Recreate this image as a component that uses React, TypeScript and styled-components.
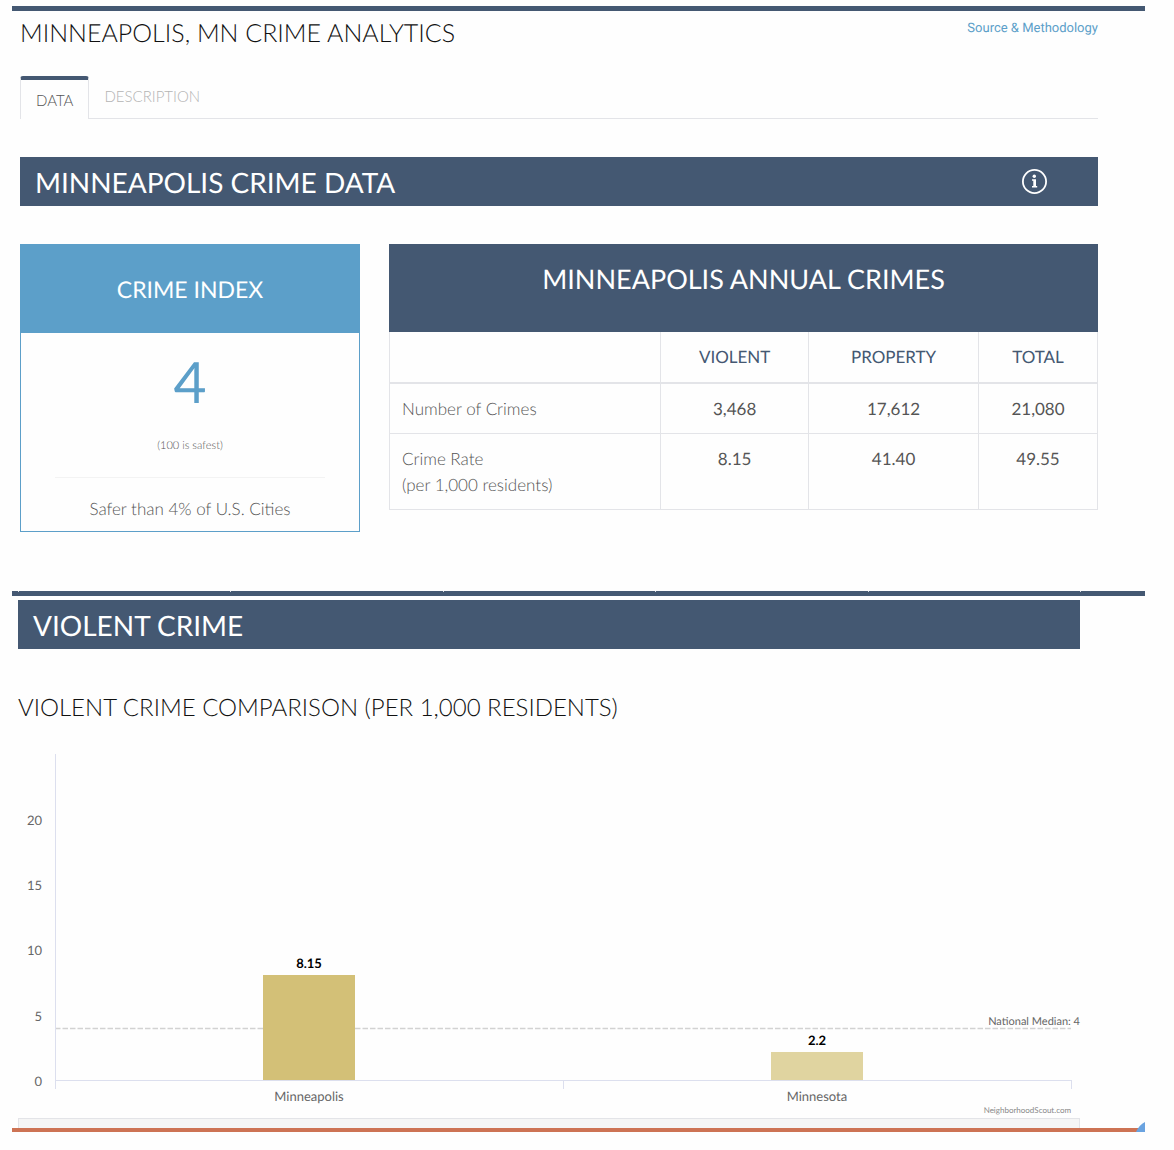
import styled, { createGlobalStyle } from 'styled-components'

const GlobalStyle = createGlobalStyle`
	* {
		box-sizing: border-box;
	}

	body {
		margin: 0;
		background: #fefefe;
		color: #222222;
		font-family: Lato, "Liberation Sans", sans-serif;
		text-rendering: geometricPrecision;
	}
`

const navy = '#445872'
const blue = '#5c9fc9'
const line = '#e3e4e8'

const Page = styled.main`
	padding: 6px 29px 18px 12px;
`

const Rule = styled.div`
	display: flex;
	justify-content: space-between;
	height: 5px;
	padding: 0 64px 0 6px;
	background: ${navy};
`

const RuleMark = styled.span`
	width: 1px;
	height: 1px;
	background: #d5dae1;
`

const Overview = styled.section`
	padding: 0 47px 59px 8px;
`

const Header = styled.header`
	display: flex;
	justify-content: space-between;
	align-items: flex-start;
	height: 65px;
	padding-top: 6px;
`

const Title = styled.h1`
	margin: 0;
	font-size: 25px;
	font-weight: 300;
	line-height: 33px;
	color: #111111;
`

const SourceLink = styled.a`
	font-family: Roboto, sans-serif;
	font-size: 13px;
	line-height: 24px;
	color: ${blue};
	text-decoration: none;
`

const Tabs = styled.nav`
	display: flex;
	height: 43px;
	margin-bottom: 38px;
	border-bottom: 1px solid ${line};
`

const Tab = styled.button<{ $selected?: boolean }>`
	height: ${props => props.$selected ? "43px" : "40px"};
	padding: 0 15px;
	border: ${props => props.$selected ? `1px solid ${line}` : "0"};
	border-top: ${props => props.$selected ? `4px solid ${navy}` : "0"};
	border-bottom: 0;
	border-radius: 3px 3px 0 0;
	background: #fefefe;
	font-family: inherit;
	font-size: 15px;
	font-weight: 300;
	color: ${props => props.$selected ? "#555555" : "#b4b4b4"};
	cursor: pointer;
`

const Banner = styled.div`
	display: flex;
	justify-content: space-between;
	align-items: center;
	height: 49px;
	padding: 0 50px 0 15px;
	background: ${navy};
	color: #ffffff;
`

const BannerTitle = styled.h2`
	margin: 0;
	font-size: 28px;
	font-weight: 400;
	line-height: 48px;
`

const InfoButton = styled.button`
	display: flex;
	padding: 0;
	border: 0;
	background: none;
	color: inherit;
	cursor: pointer;
`

const Panels = styled.div`
	display: grid;
	grid-template-columns: 340fr 709fr;
	align-items: start;
	gap: 29px;
	margin-top: 38px;
`

const Card = styled.article`
	border: 1px solid ${blue};
	text-align: center;
	font-weight: 300;
	color: #555555;
`

const CardTitle = styled.h3`
	margin: 0;
	background: ${blue};
	color: #ffffff;
	font-size: 23px;
	font-weight: 400;
	line-height: 88px;
`

const Score = styled.p`
	margin: 0;
	padding-top: 14px;
	font-size: 57px;
	font-weight: 400;
	line-height: 70px;
	color: ${blue};
`

const ScoreNote = styled.p`
	margin: 0 34px;
	padding: 19px 0 21px;
	border-bottom: 1px solid #f3f3f3;
	font-size: 11px;
	line-height: 20px;
`

const Safer = styled.p`
	margin: 0;
	padding: 18px 0 9px;
	font-size: 17px;
	line-height: 26px;
`

const CrimeTable = styled.table`
	width: 100%;
	table-layout: fixed;
	border-collapse: collapse;
	font-size: 17px;
	line-height: 26px;

	caption {
		height: 88px;
		padding-top: 17px;
		background: ${navy};
		color: #ffffff;
		font-size: 27px;
		line-height: 36px;
	}

	th, td {
		padding: 12px 12px 11px;
		border: 1px solid ${line};
		font-weight: 400;
		text-align: center;
		vertical-align: top;
		color: #555555;
	}

	thead th, thead td {
		padding-bottom: 12px;
		border-top: 0;
		border-bottom: 2px solid ${line};
		color: ${navy};
	}

	tbody th {
		font-weight: 300;
		text-align: left;
	}
`

const Col = styled.col<{ $width: string }>`
	width: ${props => props.$width};
`

const Violent = styled.section`
	padding: 4px 65px 0 6px;
`

const ChartTitle = styled.h3`
	margin: 42px 0 24px;
	font-size: 24px;
	font-weight: 300;
	line-height: 33px;
	color: #111111;
`

const Chart = styled.svg`
	display: block;
	width: 100%;
	overflow: visible;

	text {
		font-size: 13px;
		fill: #666666;
	}

	.value {
		font-weight: 700;
		fill: #000000;
	}

	.median {
		font-size: 11px;
	}

	.credit {
		font-size: 8px;
		fill: #888888;
	}
`

const Strip = styled.div`
	height: 10px;
	border: 1px solid ${line};
	border-bottom: 0;
	background: #f5f5f5;
`

const Footer = styled.footer`
	position: relative;
	height: 4px;
	background: #cd7354;
`

const Corner = styled.svg`
	position: absolute;
	right: 0;
	bottom: 0;
`

const crimes = [
	{ label: 'Number of Crimes', values: ['3,468', '17,612', '21,080'] },
	{ label: 'Crime Rate', note: '(per 1,000 residents)', values: ['8.15', '41.40', '49.55'] },
]

const places = [
	{ name: 'Minneapolis', rate: 8.15, color: '#d3c077' },
	{ name: 'Minnesota', rate: 2.2, color: '#e0d4a0' },
]

const InfoIcon = () => (
	<svg width="26" height="26" viewBox="0 0 26 26" fill="none" aria-hidden="true">
		<circle cx="12.5" cy="12.5" r="11.6" stroke="currentColor" strokeWidth="1.8" />
		<circle cx="12.3" cy="7.3" r="1.7" fill="currentColor" />
		<path d="M10 10.2h4v6.9h1.2v1.5H10v-1.5h1.3v-5.4H10z" fill="currentColor" />
	</svg>
)

const LEFT = 37
const BASE = 332
const BAND = 508
const BAR = 92
const yOf = (value: number) => Math.round(BASE - value * 13.06)

const RateChart = () => (
	<Chart viewBox="0 0 1062 370" role="img" aria-label="Violent crime comparison">
		{[0, 5, 10, 15, 20].map((tick) => (
			<text key={tick} x={LEFT - 13} y={yOf(tick) + 6} textAnchor="end">{tick}</text>
		))}
		<path d={`M${LEFT} ${yOf(4) + 0.5}H${LEFT + BAND * 2}`} stroke="#d2d2d2" strokeWidth="1.5" strokeDasharray="5.5 2" />
		<path
			d={`M${LEFT + 0.5} 6V${BASE + 9}M${LEFT} ${BASE + 0.5}H${LEFT + BAND * 2 + 1}M${LEFT + BAND + 0.5} ${BASE}v9M${LEFT + BAND * 2 + 0.5} ${BASE}v9`}
			stroke="#dcdfee"
			fill="none"
		/>
		{places.map((place, i) => {
			const center = LEFT + BAND * i + BAND / 2
			return (
				<g key={place.name}>
					<rect x={center - BAR / 2} y={yOf(place.rate) + 1} width={BAR} height={BASE - yOf(place.rate) - 1} fill={place.color} />
					<text className="value" x={center} y={yOf(place.rate) - 6} textAnchor="middle">{place.rate}</text>
					<text x={center} y={BASE + 21} textAnchor="middle">{place.name}</text>
				</g>
			)
		})}
		<text className="median" x="1062" y={yOf(4) - 3} textAnchor="end">National Median: 4</text>
		<text className="credit" x="1053" y="365" textAnchor="end">NeighborhoodScout.com</text>
	</Chart>
)

const App = () => {
	return (
		<>
		<GlobalStyle />
		<Page>
			<Rule />
			<Overview>
				<Header>
					<Title>MINNEAPOLIS, MN CRIME ANALYTICS</Title>
					<SourceLink href="#methodology">Source &amp; Methodology</SourceLink>
				</Header>
				<Tabs>
					<Tab $selected>DATA</Tab>
					<Tab>DESCRIPTION</Tab>
				</Tabs>
				<Banner>
					<BannerTitle>MINNEAPOLIS CRIME DATA</BannerTitle>
					<InfoButton aria-label="About this data"><InfoIcon /></InfoButton>
				</Banner>
				<Panels>
					<Card>
						<CardTitle>CRIME INDEX</CardTitle>
						<Score>4</Score>
						<ScoreNote>(100 is safest)</ScoreNote>
						<Safer>Safer than 4% of U.S. Cities</Safer>
					</Card>
					<CrimeTable>
						<caption>MINNEAPOLIS ANNUAL CRIMES</caption>
						<colgroup>
							<Col $width="38.3%" />
							<Col $width="20.9%" />
							<Col $width="24%" />
							<Col $width="16.8%" />
						</colgroup>
						<thead>
							<tr>
								<td />
								<th scope="col">VIOLENT</th>
								<th scope="col">PROPERTY</th>
								<th scope="col">TOTAL</th>
							</tr>
						</thead>
						<tbody>
							{crimes.map((row) => (
								<tr key={row.label}>
									<th scope="row">{row.label}{row.note && <><br />{row.note}</>}</th>
									{row.values.map((value) => <td key={value}>{value}</td>)}
								</tr>
							))}
						</tbody>
					</CrimeTable>
				</Panels>
			</Overview>
			<Rule>
				{[0, 1, 2, 3, 4, 5].map((mark) => <RuleMark key={mark} />)}
			</Rule>
			<Violent>
				<Banner>
					<BannerTitle>VIOLENT CRIME</BannerTitle>
				</Banner>
				<ChartTitle>VIOLENT CRIME COMPARISON (PER 1,000 RESIDENTS)</ChartTitle>
				<RateChart />
				<Strip />
			</Violent>
			<Footer>
				<Corner width="9" height="10" viewBox="0 0 9 10" aria-hidden="true">
					<path d="M0 10Q3 3 9 0V10z" fill="#6aa3e0" />
				</Corner>
			</Footer>
		</Page>
		</>
	)
}

export default App
